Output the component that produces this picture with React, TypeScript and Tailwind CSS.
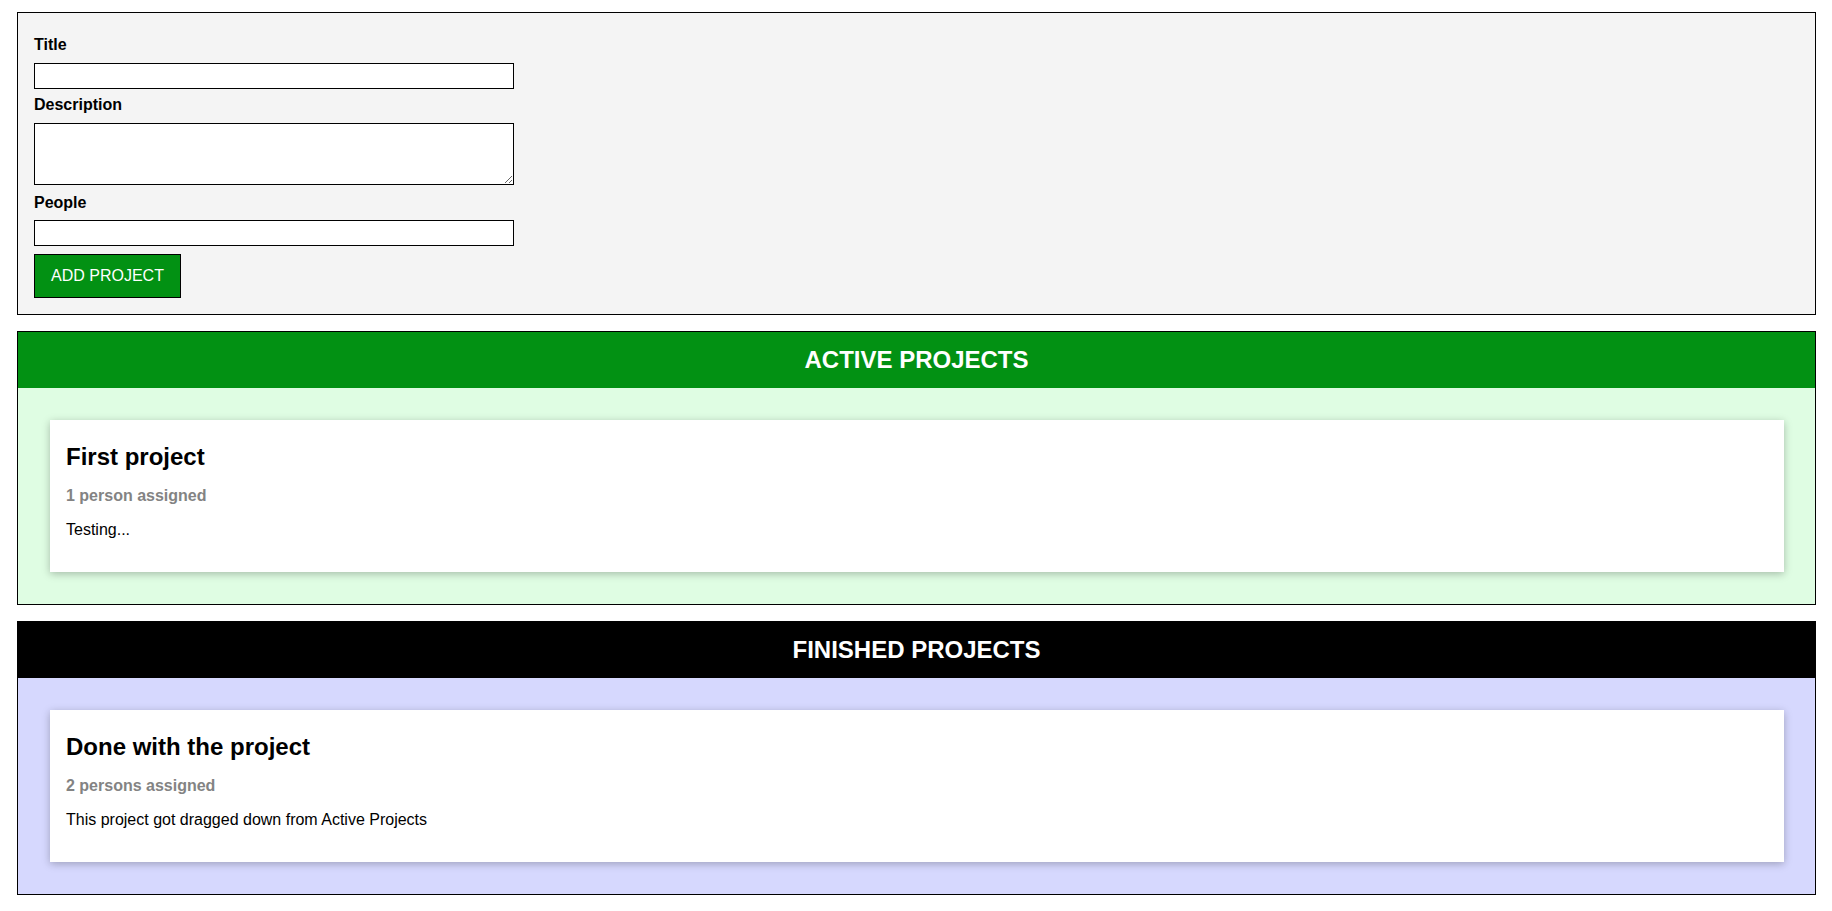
import React from "react";

function Card({ title, assigned, desc }: { title: string; assigned: string; desc: string }) {
  return (
    <div className="bg-white px-4 pt-[23px] pb-[33px] shadow-[0_2px_8px_rgba(0,0,0,0.26)]">
      <h2 className="text-[24px] font-bold leading-[28px] text-black">{title}</h2>
      <h3 className="mt-4 text-[16px] font-bold leading-[18px] text-[#838383]">{assigned}</h3>
      <p className="mt-4 text-[16px] leading-[18px] text-black">{desc}</p>
    </div>
  );
}

function Section({ title, headerBg, bodyBg, children }: { title: string; headerBg: string; bodyBg: string; children: React.ReactNode }) {
  return (
    <section className="mt-4 ml-[17px] mr-[16px] border border-black">
      <header className={`flex h-[56px] items-center justify-center ${headerBg}`}>
        <h2 className="text-[24px] font-bold text-white">{title}</h2>
      </header>
      <div className={`pl-[32px] pr-[31px] pt-8 pb-8 ${bodyBg}`}>{children}</div>
    </section>
  );
}

export default function App() {
  return (
    <div className="min-h-[911px] bg-white pt-[12px] pb-4 font-['Liberation_Sans',Arial,sans-serif] text-black">
      <form className="ml-[17px] mr-[16px] border border-black bg-[#f4f4f4] px-4 pt-[23px] pb-[16px]" onSubmit={(e) => e.preventDefault()}>
        <label className="block text-[16px] font-bold leading-[18px]">Title</label>
        <input type="text" className="mt-[9px] block h-[26px] w-[480px] border border-black bg-white" />
        <label className="mt-[7px] block text-[16px] font-bold leading-[18px]">Description</label>
        <textarea className="mt-[9px] block h-[62px] w-[480px] resize-y border border-black bg-white" />
        <label className="mt-[9px] block text-[16px] font-bold leading-[18px]">People</label>
        <input type="text" className="mt-[8px] block h-[26px] w-[480px] border border-black bg-white" />
        <button type="submit" className="mt-[8px] block h-[44px] w-[147px] border border-black bg-[#029113] text-[16px] text-white">
          ADD PROJECT
        </button>
      </form>
      <Section title="ACTIVE PROJECTS" headerBg="bg-[#029113]" bodyBg="bg-[#dffde3]">
        <Card title="First project" assigned="1 person assigned" desc="Testing..." />
      </Section>
      <Section title="FINISHED PROJECTS" headerBg="bg-black" bodyBg="bg-[#d6d8fe]">
        <Card title="Done with the project" assigned="2 persons assigned" desc="This project got dragged down from Active Projects" />
      </Section>
    </div>
  );
}
